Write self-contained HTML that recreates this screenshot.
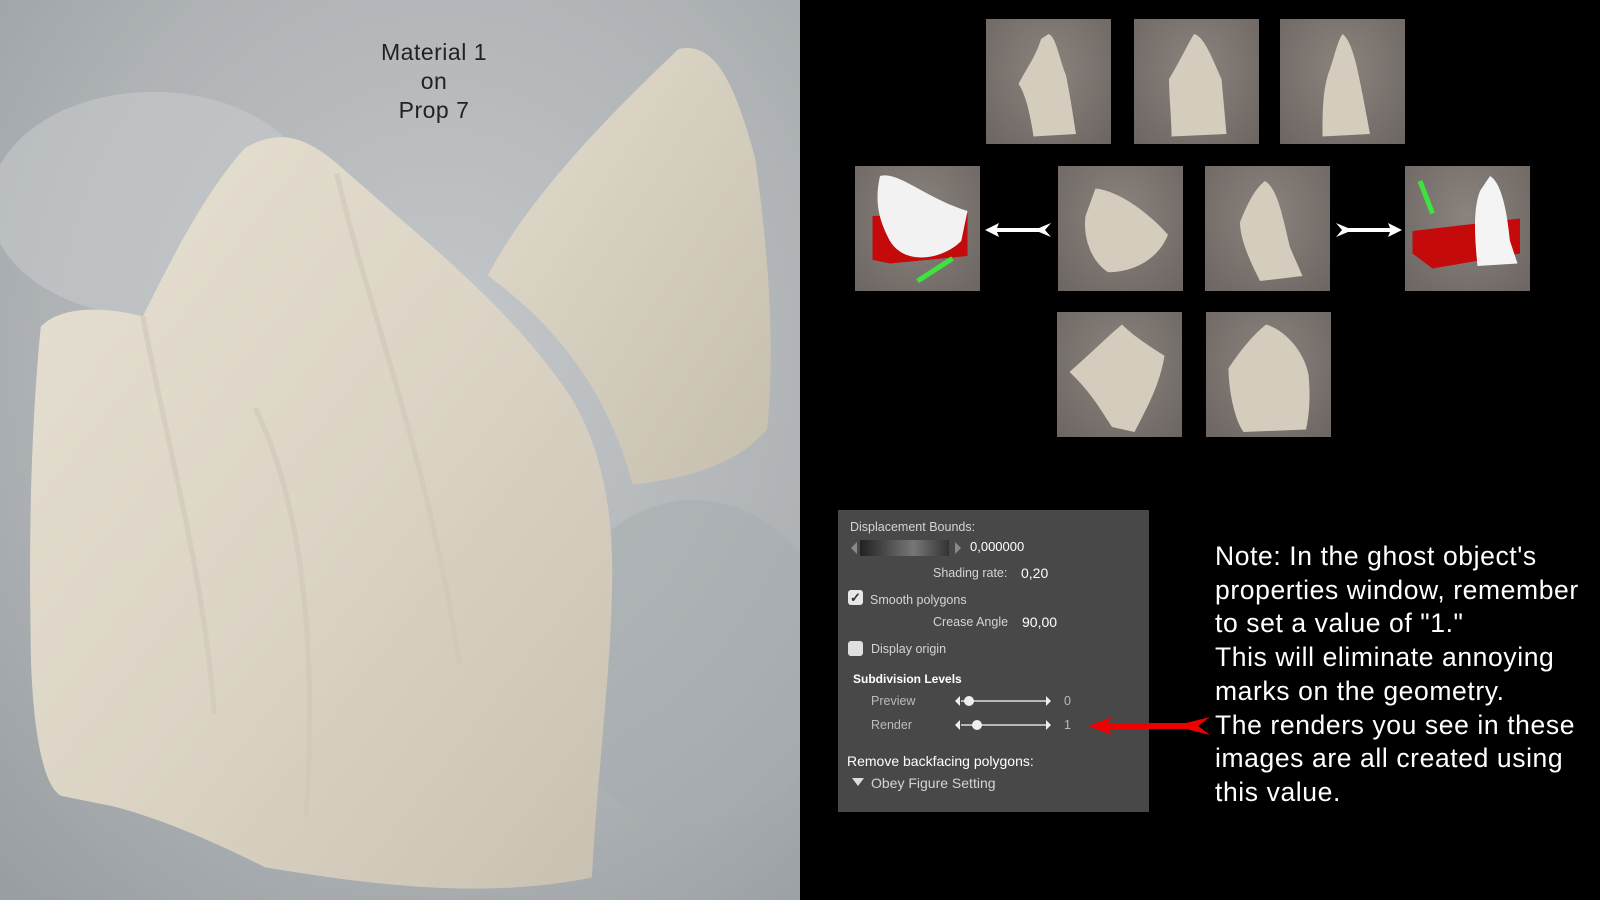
<!DOCTYPE html>
<html><head><meta charset="utf-8"><style>
*{margin:0;padding:0;box-sizing:border-box}
body{width:1600px;height:900px;background:#000;position:relative;overflow:hidden;font-family:"Liberation Sans",sans-serif}
.abs{position:absolute}
.th{position:absolute;width:125px;height:125px;background:radial-gradient(ellipse at 50% 40%,#8a837e,#6c6561)}
.th svg{width:100%;height:100%}
.pt{position:absolute;color:#d4d4d4;font-size:12.5px;white-space:nowrap;line-height:1}
.pv{color:#fff;font-size:14px}
.note{position:absolute;left:1215px;top:540px;color:#fff;font-size:26.5px;line-height:33.7px;letter-spacing:0.6px;font-family:"Liberation Sans",sans-serif;white-space:nowrap}
.mt{position:absolute;left:334px;top:38px;width:200px;text-align:center;color:#222;font-size:23px;line-height:29px;font-family:"Liberation Sans",sans-serif;letter-spacing:0.5px}
</style></head><body>

<svg class="abs" style="left:0;top:0" width="800" height="900" viewBox="0 0 784 882" preserveAspectRatio="none">
<defs>
<radialGradient id="bg" cx="55%" cy="40%" r="80%"><stop offset="0" stop-color="#c4c8ca"/><stop offset="0.6" stop-color="#afb3b6"/><stop offset="1" stop-color="#999ea2"/></radialGradient>
<linearGradient id="cl" x1="0" y1="0" x2="1" y2="1"><stop offset="0" stop-color="#e6e0d2"/><stop offset="0.5" stop-color="#dcd5c6"/><stop offset="1" stop-color="#c9c1b0"/></linearGradient>
<linearGradient id="cl2" x1="0" y1="0" x2="1" y2="1"><stop offset="0" stop-color="#e2dccd"/><stop offset="1" stop-color="#c6bfae"/></linearGradient>
</defs>
<rect width="784" height="882" fill="url(#bg)"/>
<ellipse cx="150" cy="200" rx="160" ry="110" fill="#c6c9cb" opacity=".6"/>
<ellipse cx="680" cy="650" rx="140" ry="160" fill="#a5abaf" opacity=".5"/>
<path d="M478,270 C520,190 600,110 665,48 C700,40 720,80 740,155 C752,240 760,330 752,420 C720,460 660,470 620,475 C600,400 560,330 478,270Z" fill="url(#cl2)"/>
<path d="M240,145 C275,125 300,135 330,160 C420,240 500,300 560,390 C590,440 600,500 600,560 C600,650 585,760 580,860 C480,880 380,870 260,850 C200,820 150,800 110,790 L60,780 C40,770 30,700 30,620 C28,500 32,400 40,320 C60,300 100,300 140,310 C170,250 200,190 240,145Z" fill="url(#cl)"/>
<path d="M140,310 C160,420 200,560 210,700 M330,170 C360,300 420,450 450,650 M250,400 C300,500 310,650 300,800" stroke="#cfc7b6" stroke-width="5" fill="none" opacity=".6"/>
</svg>
<div class="mt">Material 1<br>on<br>Prop 7</div>

<div class="th" style="left:986px;top:19px"><svg viewBox="0 0 100 100"><path d="M50,12 C56,14 58,30 64,45 C68,65 70,80 72,92 L38,94 C36,80 32,60 26,52 C32,40 40,30 44,16Z" fill="#d4ccbc"/></svg></div>
<div class="th" style="left:1134px;top:19px"><svg viewBox="0 0 100 100"><path d="M48,12 C56,14 62,30 70,48 L74,92 L30,94 C30,80 28,60 28,48 C36,35 42,22 48,12Z" fill="#d4ccbc"/></svg></div>
<div class="th" style="left:1280px;top:19px"><svg viewBox="0 0 100 100"><path d="M50,12 C58,18 62,40 66,60 L72,92 L34,94 C34,75 34,55 40,40 C44,28 46,18 50,12Z" fill="#d4ccbc"/></svg></div>
<div class="th" style="left:855px;top:166px"><svg viewBox="0 0 100 100"><path d="M14,40 L90,38 L90,72 L28,78 L14,75Z" fill="#c40a0a"/><path d="M20,8 C35,4 55,25 90,36 L85,60 C70,75 40,80 28,60 C20,45 15,30 20,8Z" fill="#f2f2f2"/><path d="M50,92 L78,74" stroke="#3ee33e" stroke-width="4"/></svg></div>
<div class="th" style="left:1058px;top:166px"><svg viewBox="0 0 100 100"><path d="M30,18 C50,20 75,40 88,55 C80,75 60,85 40,85 C25,75 20,55 22,40 Z" fill="#d4ccbc"/></svg></div>
<div class="th" style="left:1205px;top:166px"><svg viewBox="0 0 100 100"><path d="M48,12 C58,18 62,40 68,65 L78,88 L44,92 C38,80 28,60 28,45 C34,30 40,18 48,12Z" fill="#d4ccbc"/></svg></div>
<div class="th" style="left:1405px;top:166px"><svg viewBox="0 0 100 100"><path d="M6,52 L92,42 L92,70 L22,82 L6,70Z" fill="#c40a0a"/><path d="M68,8 C78,14 82,40 84,60 L90,78 L58,80 C56,60 54,35 60,20Z" fill="#f4f4f4"/><path d="M12,12 L22,38" stroke="#3ee33e" stroke-width="4"/></svg></div>
<div class="th" style="left:1057px;top:312px"><svg viewBox="0 0 100 100"><path d="M52,10 C62,20 78,30 86,35 C82,60 70,80 62,96 L44,92 C36,80 28,65 10,48 C25,35 40,20 52,10Z" fill="#d4ccbc"/></svg></div>
<div class="th" style="left:1206px;top:312px"><svg viewBox="0 0 100 100"><path d="M48,10 C62,14 78,30 82,50 C84,70 82,85 80,94 L30,96 C22,85 18,60 18,45 C28,30 38,18 48,10Z" fill="#d4ccbc"/></svg></div>

<svg class="abs" style="left:985px;top:222px" width="68" height="16" viewBox="0 0 68 16"><path d="M0,8 L14,1 L12,6 L54,6 L66,1 L60,8 L66,15 L54,10 L12,10 L14,15Z" fill="#fff"/></svg>
<svg class="abs" style="left:1334px;top:222px" width="68" height="16" viewBox="0 0 68 16"><path d="M68,8 L54,1 L56,6 L14,6 L2,1 L8,8 L2,15 L14,10 L56,10 L54,15Z" fill="#fff"/></svg>

<div class="abs" style="left:838px;top:510px;width:311px;height:302px;background:#484848"></div>
<div class="pt" style="left:850px;top:521px">Displacement Bounds:</div>
<div class="abs" style="left:851px;top:542px;width:0;height:0;border-top:6px solid transparent;border-bottom:6px solid transparent;border-right:6px solid #8a8a8a"></div>
<div class="abs" style="left:860px;top:540px;width:89px;height:16px;background:linear-gradient(90deg,#222,#777 60%,#333)"></div>
<div class="abs" style="left:955px;top:542px;width:0;height:0;border-top:6px solid transparent;border-bottom:6px solid transparent;border-left:6px solid #8a8a8a"></div>
<div class="pt pv" style="left:970px;top:540px;font-size:13px">0,000000</div>
<div class="pt" style="left:933px;top:567px">Shading rate:</div>
<div class="pt pv" style="left:1021px;top:566px">0,20</div>
<div class="abs" style="left:848px;top:590px;width:15px;height:15px;background:#e8e8e8;border-radius:3px;color:#333;font-size:13px;line-height:15px;text-align:center;font-weight:bold">✓</div>
<div class="pt" style="left:870px;top:594px">Smooth polygons</div>
<div class="pt" style="left:933px;top:616px">Crease Angle</div>
<div class="pt pv" style="left:1022px;top:615px">90,00</div>
<div class="abs" style="left:848px;top:641px;width:15px;height:15px;background:#e0e0e0;border-radius:3px"></div>
<div class="pt" style="left:871px;top:643px">Display origin</div>
<div class="pt" style="left:853px;top:673px;color:#fff;font-weight:bold;font-size:12px">Subdivision Levels</div>
<div class="pt" style="left:871px;top:695px;color:#bbb">Preview</div>
<div class="pt" style="left:871px;top:719px;color:#bbb">Render</div>
<svg class="abs" style="left:955px;top:693px" width="96" height="40" viewBox="0 0 96 40">
<path d="M0,8 L5,3 L5,13Z M96,8 L91,3 L91,13Z M0,32 L5,27 L5,37Z M96,32 L91,27 L91,37Z" fill="#eee"/>
<line x1="6" y1="8" x2="91" y2="8" stroke="#ddd" stroke-width="1.5"/>
<line x1="6" y1="32" x2="91" y2="32" stroke="#ddd" stroke-width="1.5"/>
<circle cx="14" cy="8" r="5" fill="#eee"/><circle cx="22" cy="32" r="5" fill="#eee"/></svg>
<div class="pt" style="left:1064px;top:695px;color:#bbb">0</div>
<div class="pt" style="left:1064px;top:719px;color:#bbb">1</div>
<div class="pt" style="left:847px;top:754px;color:#fff;font-size:14px">Remove backfacing polygons:</div>
<div class="abs" style="left:852px;top:778px;width:0;height:0;border-left:6px solid transparent;border-right:6px solid transparent;border-top:8px solid #ddd"></div>
<div class="pt" style="left:871px;top:776px;font-size:14px">Obey Figure Setting</div>

<svg class="abs" style="left:1088px;top:716px" width="124" height="20" viewBox="0 0 124 20"><path d="M0,10 L24,1 L20,7 L98,7 L122,1 L110,10 L122,19 L98,13 L20,13 L24,19Z" fill="#e00"/></svg>

<div class="note">Note: In the ghost object's<br>properties window, remember<br>to set a value of "1."<br>This will eliminate annoying<br>marks on the geometry.<br>The renders you see in these<br>images are all created using<br>this value.</div>
</body></html>
